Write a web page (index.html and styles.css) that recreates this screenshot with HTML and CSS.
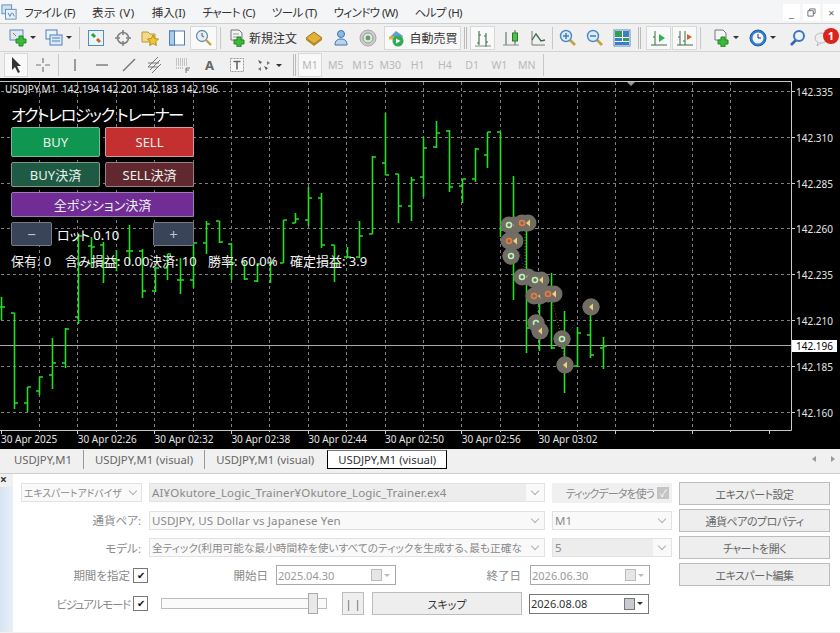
FILE: index.html
```html
<!DOCTYPE html>
<html>

<head>
    <meta charset="UTF-8">
    <title>USDJPY,M1 - MetaTrader</title>
    <link rel="stylesheet" href="styles.css">
</head>
<body>

<header class="menubar">
    <svg class="ico app-ico" viewBox="0 0 18 18"><rect x="1" y="1" width="11" height="10" fill="#cfe0f2" stroke="#5f86b5"/><rect x="5" y="6" width="12" height="11" fill="#e8f1fa" stroke="#5f86b5"/><path d="M8 10l2 4 2-4M13 10l2 4" fill="none" stroke="#4a78b0"/></svg>
    <nav class="menu">
        <span class="tight">ファイル (F)</span>
        <span class="loose">表示 (V)</span>
        <span>挿入(I)</span>
        <span class="tight">チャート (C)</span>
        <span class="tight">ツール (T)</span>
        <span class="tight">ウィンドウ (W)</span>
        <span class="tight">ヘルプ (H)</span>
    </nav>
    <div class="win-btns">
        <span class="win-btn">_</span>
        <span class="win-btn"><svg viewBox="0 0 10 10" width="9" height="9"><path d="M3 3V1h6v5H7M1 3h6v6H1z" fill="none" stroke="#666"/></svg></span>
        <span class="win-btn">×</span>
    </div>
</header>

<div class="toolbar tb-main">
    <span class="tool wide"><svg class="ico" viewBox="0 0 18 18"><rect x="1" y="1" width="13" height="10" fill="#dbe8f5" stroke="#5f86b5"/><path d="M4 4l3 3" stroke="#c96a2a"/><path d="M10 7h4v3h3v4h-3v3h-4v-3H7v-4h3z" fill="#3cb83c" stroke="#1f8a1f"/></svg><i class="caret"></i></span>
    <span class="tool wide"><svg class="ico" viewBox="0 0 18 18"><rect x="1" y="1" width="11" height="9" fill="#eaf2fa" stroke="#4f7fb5"/><rect x="5" y="6" width="12" height="10" fill="#dbe8f5" stroke="#4f7fb5"/><path d="M7 9h8M7 12h8" stroke="#4f7fb5"/></svg><i class="caret"></i></span>
    <span class="sep"></span>
    <span class="tool"><svg class="ico" viewBox="0 0 18 18"><rect x="1.5" y="1.5" width="15" height="15" fill="#eaf4fb" stroke="#4f8fc0"/><path d="M5 5l3 3" stroke="#3a9a3a" stroke-width="3"/><path d="M10 10l3 3" stroke="#d0622a" stroke-width="3"/></svg></span>
    <span class="tool"><svg class="ico" viewBox="0 0 18 18"><circle cx="9" cy="9" r="5.5" fill="none" stroke="#808080" stroke-width="1.6"/><path d="M9 1v5M9 12v5M1 9h5M12 9h5" stroke="#808080" stroke-width="1.6"/></svg></span>
    <span class="tool"><svg class="ico" viewBox="0 0 18 18"><path d="M1 3h6l2 2h5v8H1z" fill="#f3d98a" stroke="#b8963a"/><path d="M12 6l1.7 3.6 3.8.5-2.8 2.6.7 3.8-3.4-1.9-3.4 1.9.7-3.8-2.8-2.6 3.8-.5z" fill="#f2c531" stroke="#b58f16"/></svg></span>
    <span class="tool"><svg class="ico" viewBox="0 0 18 18"><rect x="1.5" y="2" width="15" height="14" fill="#fff" stroke="#4f7fb5"/><rect x="1.5" y="2" width="5" height="14" fill="#a9cdeb" stroke="#4f7fb5"/></svg></span>
    <span class="tool pressed"><svg class="ico" viewBox="0 0 18 18"><circle cx="7" cy="7" r="5.5" fill="#e4eef7" stroke="#6a8cab" stroke-width="1.3"/><path d="M7 4v3l2 1" fill="none" stroke="#555"/><path d="M11 11l5 5" stroke="#c9a13a" stroke-width="2.4"/></svg></span>
    <span class="sep sep-b"></span>
    <span class="tool order"><svg class="ico" viewBox="0 0 18 18"><path d="M3 1h8l3 3v7H3z" fill="#f4f4f4" stroke="#777"/><path d="M5 5h6M5 8h6" stroke="#999"/><path d="M9 8h4v3h3v4h-3v3H9v-3H6v-4h3z" fill="#3cb83c" stroke="#1f8a1f"/></svg><span>新規注文</span></span>
    <span class="tool ml2"><svg class="ico" viewBox="0 0 18 18"><path d="M1 9l8-6 8 6-8 6z" fill="#e2b137" stroke="#97721a"/><path d="M1 9l8 6 8-6v2l-8 6-8-6z" fill="#b98b1f"/></svg></span>
    <span class="tool"><svg class="ico" viewBox="0 0 18 18"><circle cx="9" cy="5" r="3.5" fill="#8cb8e4" stroke="#3f74ad"/><path d="M3 16c0-5 3-6 6-6s6 1 6 6z" fill="#b9d4ef" stroke="#3f74ad"/></svg></span>
    <span class="tool"><svg class="ico" viewBox="0 0 18 18"><circle cx="9" cy="9" r="8" fill="#ccc" stroke="#aaa"/><circle cx="9" cy="9" r="5" fill="#e4e4e4" stroke="#999"/><circle cx="9" cy="9" r="2.4" fill="#5aa55a"/></svg></span>
    <span class="tool pressed auto-trade"><svg class="ico" viewBox="0 0 18 18"><path d="M2 9l7-7 7 5-2 4z" fill="#5f9fd0"/><path d="M2 9h6" stroke="#e2b137" stroke-width="3"/><circle cx="11" cy="12" r="5.5" fill="#33ad55"/><path d="M9 9.5v5l4.5-2.5z" fill="#fff"/></svg><span>自動売買</span></span>
    <span class="grip"></span>
    <span class="tool pressed slim"><svg class="ico" viewBox="0 0 18 18"><path d="M5 2v14M3 14h2M5 6h2M12 4v14M10 7h2M12 13h2" stroke="#3f6b4a" stroke-width="1.1" fill="none"/><path d="M1 17h16" stroke="#888"/></svg></span>
    <span class="tool ml2"><svg class="ico" viewBox="0 0 18 18"><path d="M4 3v13M13 1v15" stroke="#3f6b4a"/><rect x="10.5" y="4" width="5" height="8" fill="#4fc04f" stroke="#2a7a2a"/><path d="M1 16h16" stroke="#888"/></svg></span>
    <span class="tool"><svg class="ico" viewBox="0 0 18 18"><path d="M3 2v14h13" fill="none" stroke="#777"/><path d="M3 11l4-6 5 7 4-1" fill="none" stroke="#3f6b4a" stroke-width="1.3"/></svg></span>
    <span class="sep sep-c"></span>
    <span class="tool"><svg class="ico" viewBox="0 0 18 18"><path d="M11 11l5 5" stroke="#c9a13a" stroke-width="2.6"/><circle cx="7" cy="7" r="5.5" fill="#dcebf8" stroke="#4a88c0" stroke-width="1.4"/><path d="M4 7h6M7 4v6" stroke="#3f7fbd" stroke-width="1.5"/></svg></span>
    <span class="tool"><svg class="ico" viewBox="0 0 18 18"><path d="M11 11l5 5" stroke="#c9a13a" stroke-width="2.6"/><circle cx="7" cy="7" r="5.5" fill="#dcebf8" stroke="#4a88c0" stroke-width="1.4"/><path d="M4 7h6" stroke="#3f7fbd" stroke-width="1.5"/></svg></span>
    <span class="tool"><svg class="ico" viewBox="0 0 18 18"><rect x="1" y="1" width="16" height="16" fill="#fff" stroke="#5f86b5"/><rect x="2" y="2" width="7" height="6" fill="#2e9e5a"/><rect x="10" y="2" width="6" height="6" fill="#3a7fc8"/><rect x="2" y="9" width="7" height="3" fill="#3a7fc8"/><rect x="10" y="9" width="6" height="3" fill="#2e9e5a"/><rect x="2" y="13" width="14" height="3" fill="#3a7fc8"/></svg></span>
    <span class="grip"></span>
    <span class="tool pressed slim ml2"><svg class="ico" viewBox="0 0 18 18"><path d="M5 2v14M3 8h2M1 16h16" stroke="#3f6b4a" fill="none"/><path d="M9 5l6 4-6 4z" fill="#35ad55"/></svg></span>
    <span class="tool pressed slim ml1"><svg class="ico" viewBox="0 0 18 18"><path d="M4 2v14M9 2v14M2 8h2M7 12h2M1 16h16" stroke="#3f6b4a" fill="none"/><path d="M16 8l-5 3V5z" fill="#d0622a"/></svg></span>
    <span class="sep sep-d"></span>
    <span class="tool wide"><svg class="ico" viewBox="0 0 18 18"><path d="M3 1h8l3 3v7H3z" fill="#f4f4f4" stroke="#777"/><path d="M9 8h4v3h3v4h-3v3H9v-3H6v-4h3z" fill="#3cb83c" stroke="#1f8a1f"/></svg><i class="caret"></i></span>
    <span class="tool wide ml1"><svg class="ico" viewBox="0 0 18 18"><circle cx="9" cy="9" r="8" fill="#2f7fcf" stroke="#1f5f9f"/><circle cx="9" cy="9" r="5.5" fill="#f2f6fa"/><path d="M9 5v4h3" fill="none" stroke="#333"/></svg><i class="caret"></i></span>
    <span class="tool ml3"><svg class="ico" viewBox="0 0 18 18"><path d="M3 16l5-5" stroke="#3564b5" stroke-width="2.6"/><circle cx="11" cy="7" r="5" fill="#eaf2fb" stroke="#3f74c0" stroke-width="2"/></svg></span>
    <span class="tool chat"><svg class="ico" viewBox="0 0 18 18"><ellipse cx="8" cy="9" rx="6" ry="5" fill="#eee" stroke="#bbb"/><path d="M5 13l-1 4 4-3" fill="#eee" stroke="#bbb"/></svg><span class="badge">1</span></span>
</div>

<div class="toolbar tb-draw">
    <span class="tool pressed pick"><svg class="ico" viewBox="0 0 18 18"><path d="M5 1v13l3-3 3 6 2-1-3-6h4z" fill="#333"/></svg></span>
    <span class="tool ml1"><svg class="ico" viewBox="0 0 18 18"><path d="M9 2v5M9 11v5M2 9h5M11 9h5" stroke="#777" stroke-width="1.2"/></svg></span>
    <span class="sep sep-e"></span>
    <span class="tool"><svg class="ico" viewBox="0 0 18 18"><path d="M9 3v12" stroke="#777" stroke-width="1.4"/></svg></span>
    <span class="tool"><svg class="ico" viewBox="0 0 18 18"><path d="M3 9h12" stroke="#777" stroke-width="1.4"/></svg></span>
    <span class="tool"><svg class="ico" viewBox="0 0 18 18"><path d="M3 15L15 3" stroke="#777" stroke-width="1.4"/></svg></span>
    <span class="tool"><svg class="ico" viewBox="0 0 18 18"><path d="M1 11L11 1M3 14L13 4M5 17l9-9M1 7h11M1 11h10" stroke="#777" fill="none"/></svg></span>
    <span class="tool"><svg class="ico" viewBox="0 0 18 18"><path d="M2 3h12M2 5h12M2 7h12M2 9h12M2 12h8" stroke="#999" stroke-dasharray="1 1" fill="none"/><path d="M12 12h4M12 12v5M12 14h3" stroke="#777" fill="none"/></svg></span>
    <span class="tool letter">A</span>
    <span class="tool"><svg class="ico" viewBox="0 0 18 18"><rect x="2.5" y="2.5" width="13" height="13" fill="#f8f8f8" stroke="#999" stroke-dasharray="2 1"/><path d="M5.5 5.5h7M9 5.5v8" stroke="#666" stroke-width="1.6"/></svg></span>
    <span class="tool wide"><svg class="ico" viewBox="0 0 18 18"><path d="M3 4l4 2-2 2zM9 10l4 2-2 2z" fill="#555"/><path d="M12 5l3 2-3 2zM6 11l-3 2 3 2z" fill="#777"/></svg><i class="caret"></i></span>
    <span class="grip grip-tf"></span>
    <span class="tf pressed">M1</span>
    <span class="tf">M5</span>
    <span class="tf">M15</span>
    <span class="tf">M30</span>
    <span class="tf">H1</span>
    <span class="tf">H4</span>
    <span class="tf">D1</span>
    <span class="tf">W1</span>
    <span class="tf">MN</span>
    <span class="sep"></span>
</div>

<main class="chart">
    <svg id="plot" viewBox="0 78 840 371" width="840" height="371"></svg>

    <div class="trainer">
        <div class="trainer-title">オクトレロジック トレーナー</div>
        <div class="btn-row">
            <button class="t-btn big buy">BUY</button>
            <button class="t-btn big sell">SELL</button>
        </div>
        <div class="btn-row">
            <button class="t-btn mid buy-close">BUY決済</button>
            <button class="t-btn mid sell-close">SELL決済</button>
        </div>
        <button class="t-btn mid close-all">全ポジション決済</button>
        <div class="lot-row">
            <button class="t-btn lot-btn">−</button>
            <span class="lot-value">ロット 0.10</span>
            <button class="t-btn lot-btn">+</button>
        </div>
    </div>
    <div class="stats">
        <span class="st-hold">保有: 0</span>
        <span class="st-float">含み損益: 0.00</span>
        <span class="st-count">決済: 10</span>
        <span class="st-rate">勝率: 60.0%</span>
        <span>確定損益: 3.9</span>
    </div>
</main>

<div class="tabs">
    <span class="tab">USDJPY,M1</span>
    <span class="tab">USDJPY,M1 (visual)</span>
    <span class="tab tab-last">USDJPY,M1 (visual)</span>
    <span class="tab active">USDJPY,M1 (visual)</span>
    <span class="tab-arrows"><i class="arr-l"></i><i class="arr-r"></i></span>
</div>

<section class="tester">
    <aside class="strip"><span class="strip-close">×</span><div class="strip-fill"></div></aside>
    <div class="form">
        <div class="form-grid">
            <div class="field ea-type"><span class="cut">エキスパートアドバイザ</span><i class="chev"></i></div>
            <div class="field shaded"><span class="fill path">AI¥Okutore_Logic_Trainer¥Okutore_Logic_Trainer.ex4</span><i class="chev"></i></div>
            <div class="tick-opt"><span>ティックデータを使う</span><i class="check-off">✓</i></div>

            <label class="lbl">通貨ペア:</label>
            <div class="field"><span class="fill spaced">USDJPY, US Dollar vs Japanese Yen</span><i class="chev"></i></div>
            <div class="field"><span class="fill">M1</span><i class="chev"></i></div>

            <label class="lbl">モデル:</label>
            <div class="field"><span class="fill cut model">全ティック(利用可能な最小時間枠を使いすべてのティックを生成する、最も正確な</span><i class="chev"></i></div>
            <div class="field shaded"><span class="fill">5</span><i class="chev"></i></div>
        </div>

        <div class="form-row row-period">
            <span class="lbl lbl-check">期間を指定</span>
            <i class="check">✔</i>
            <span class="lbl lbl-start">開始日</span>
            <div class="date off"><span>2025.04.30</span><i class="cal"></i><i class="caret"></i></div>
            <span class="lbl lbl-end">終了日</span>
            <div class="date off"><span>2026.06.30</span><i class="cal"></i><i class="caret"></i></div>
        </div>

        <div class="form-row row-visual">
            <span class="lbl lbl-check lbl-visual">ビジュアルモード</span>
            <i class="check">✔</i>
            <div class="slider"><i class="thumb"></i></div>
            <button class="win pause">| |</button>
            <button class="win skip">スキップ</button>
            <div class="date current"><span>2026.08.08</span><i class="cal"></i><i class="caret"></i></div>
        </div>
    </div>
    <div class="side">
        <button class="win side-btn">エキスパート設定</button>
        <button class="win side-btn">通貨ペアのプロパティ</button>
        <button class="win side-btn">チャートを開く</button>
        <button class="win side-btn">エキスパート編集</button>
    </div>
</section>

<script src="chart.js"></script>
</body>
</html>
```

FILE: styles.css
```css
html {
    font-family: "Noto Sans", "Noto Sans CJK JP", sans-serif;
    font-feature-settings: "palt";
    box-sizing: border-box;
}

*,
*:before,
*:after {
    box-sizing: inherit;
}

body {
    margin: 0;
    width: 840px;
    height: 633px;
    overflow: hidden;
    background-color: #f0f0f0;
    color: #333;
    font-size: 12px;
}

i {
    font-style: normal;
}

.ico {
    width: 18px;
    height: 18px;
    flex: none;
}

/* menu bar */

.menubar {
    height: 24px;
    display: flex;
    align-items: center;
    padding-left: 1px;
    border-bottom: 1px solid #cfcfcf;
    background-color: #f4f5f6;
}

.app-ico {
    width: 16px;
    height: 16px;
}

.menu {
    display: flex;
    gap: 17px;
    margin-left: 7px;
    font-size: 11.5px;
    white-space: nowrap;
}

.menu .tight {
    letter-spacing: -0.6px;
}

.menu .loose {
    letter-spacing: 0.5px;
}

.win-btns {
    display: flex;
    gap: 3px;
    margin-left: auto;
    align-self: flex-start;
    padding-top: 4px;
}

.win-btn {
    width: 17px;
    height: 17px;
    display: flex;
    align-items: center;
    justify-content: center;
    background-color: #fff;
    color: #666;
    font-size: 11px;
}

/* toolbars */

.toolbar {
    display: flex;
    align-items: center;
    padding-left: 4px;
    background-color: #f0f0f0;
}

.tb-main {
    height: 28px;
    border-bottom: 1px solid #d4d4d4;
}

.tb-draw {
    height: 26px;
}

.tool {
    position: relative;
    width: 27px;
    height: 24px;
    flex: none;
    display: flex;
    align-items: center;
    justify-content: center;
}

.tool.wide {
    width: 36px;
    gap: 3px;
}

.tool.pressed,
.tf.pressed {
    background-color: #f9f9f9;
    box-shadow: inset 1px 1px 0 #d8d8d8, inset -1px -1px 0 #d8d8d8;
}

.slim {
    width: 25px;
}

.pick {
    width: 24px;
}

.order {
    width: 72px;
    margin-left: 0;
    gap: 3px;
    justify-content: flex-start;
    padding-left: 2px;
    color: #333;
    white-space: nowrap;
}

.auto-trade {
    width: 77px;
    gap: 4px;
    margin-left: 3px;
    white-space: nowrap;
}

.letter {
    font-weight: 700;
    font-size: 13px;
    color: #666;
}

.ml1 { margin-left: 1px; }
.ml2 { margin-left: 2px; }
.ml3 { margin-left: 3px; }

.caret {
    width: 0;
    height: 0;
    flex: none;
    border-left: 3px solid transparent;
    border-right: 3px solid transparent;
    border-top: 3px solid #333;
}

.sep {
    width: 1px;
    height: 22px;
    flex: none;
    margin: 0 2px 0 3px;
    background-color: #c8c8c8;
}

.sep-b { margin: 0 5px 0 3px; }
.sep-c { margin: 0 1px 0 1px; }
.sep-d { margin: 0 6px 0 3px; }
.sep-e { margin: 0 2px 0 2px; }

.grip {
    width: 3px;
    height: 22px;
    flex: none;
    margin: 0 3px;
    border-left: 1px solid #bbb;
    border-right: 1px solid #bbb;
}

.grip-tf {
    margin: 0 2px 0 7px;
}

.tf {
    width: 27.3px;
    height: 24px;
    flex: none;
    display: flex;
    align-items: center;
    justify-content: center;
    color: #b8b8b8;
    font-size: 10.5px;
}

.tf.pressed {
    width: 24px;
}

.chat .ico {
    margin-right: 4px;
}

.badge {
    position: absolute;
    top: 2px;
    left: 13px;
    width: 16px;
    height: 16px;
    border-radius: 50%;
    background-color: #d8261e;
    color: #fff;
    font-size: 11px;
    font-weight: 700;
    line-height: 16px;
    text-align: center;
}

/* chart */

.chart {
    position: relative;
    height: 371px;
    background-color: #000;
}

#plot {
    display: block;
}

#plot text {
    font-family: "Noto Sans", sans-serif;
    font-size: 10px;
    fill: #e4e4e4;
}

#plot text.price-now {
    fill: #000;
}

.trainer {
    position: absolute;
    left: 11px;
    top: 27px;
    width: 183px;
    display: flex;
    flex-direction: column;
    gap: 5px;
}

.trainer-title {
    height: 21px;
    margin-bottom: -4px;
    color: #fff;
    font-size: 16px;
    letter-spacing: -1.35px;
    line-height: 21px;
    white-space: nowrap;
}

.btn-row {
    display: flex;
    gap: 5px;
}

.btn-row .t-btn {
    flex: 1;
}

.t-btn {
    padding: 0;
    border: 1px solid #8a9a90;
    border-radius: 2px;
    color: #e8f2ec;
    font-family: inherit;
    font-feature-settings: inherit;
    font-size: 13px;
}

.big { height: 30px; }
.mid { height: 25px; }

.buy {
    background-color: #0f9650;
    border-color: #7fb898;
}

.sell {
    background-color: #c42f2f;
    border-color: #d69a9a;
}

.buy-close {
    background-color: #1f5a45;
    border-color: #7a9a8a;
}

.sell-close {
    background-color: #62282f;
    border-color: #9a7f82;
}

.close-all {
    width: 100%;
    background-color: #722c96;
    border-color: #9a7fb0;
}

.lot-row {
    height: 24px;
    display: flex;
    align-items: center;
}

.lot-btn {
    width: 41px;
    height: 24px;
    background-color: #3a4458;
    border-color: #767b85;
    color: #bcc3cf;
    font-size: 15px;
    line-height: 1;
}

.lot-value {
    flex: 1;
    padding-left: 5px;
    color: #fff;
    font-size: 13px;
    white-space: nowrap;
}

.stats {
    position: absolute;
    left: 11px;
    top: 173px;
    display: flex;
    color: #f2f2f2;
    font-size: 13px;
    white-space: nowrap;
}

.st-hold { width: 54px; }
.st-float { width: 84px; }
.st-count { width: 59px; }
.st-rate { width: 82px; }

/* tabs */

.tabs {
    height: 25px;
    display: flex;
    align-items: flex-start;
    padding-top: 1px;
    border-bottom: 1px solid #cfcfcf;
    color: #666;
    font-size: 11.3px;
}

.tab {
    height: 19px;
    padding: 0 11px;
    border-right: 1px solid #999;
    line-height: 19px;
    white-space: nowrap;
}

.tab:first-child {
    padding-left: 14px;
}

.tab-last {
    width: 122px;
    border-right: 0;
}

.tab.active {
    width: 120px;
    padding-left: 10px;
    border: 1px solid #000;
    border-top-color: #777;
    background-color: #fff;
    color: #333;
    line-height: 17px;
}

.tab-arrows {
    margin-left: auto;
    padding: 6px 5px 0 0;
    display: flex;
    gap: 15px;
}

.arr-l,
.arr-r {
    width: 0;
    height: 0;
    border-top: 3px solid transparent;
    border-bottom: 3px solid transparent;
}

.arr-l { border-right: 4px solid #999; }
.arr-r { border-left: 4px solid #999; }

/* strategy tester */

.tester {
    height: 158px;
    display: flex;
    background-color: #fff;
    color: #8a8a8a;
}

.strip {
    width: 13px;
    flex: none;
    display: flex;
    flex-direction: column;
    background-color: #f0f0f0;
}

.strip-close {
    height: 13px;
    color: #333;
    font-size: 12px;
    font-weight: 700;
    line-height: 11px;
}

.strip-fill {
    flex: 1;
    background: linear-gradient(to right, #d5e4f2, #e8f0f7);
}

.form {
    width: 659px;
    flex: none;
    padding-top: 9px;
}

.form-grid {
    display: grid;
    grid-template-columns: 129px 396px 120px;
    grid-auto-rows: 19px;
    gap: 8.5px 7px;
    align-items: center;
}

.lbl {
    font-size: 11.5px;
    text-align: right;
    white-space: nowrap;
}

.form-grid .lbl {
    padding-right: 1px;
}

.field {
    height: 19px;
    display: flex;
    align-items: center;
    border: 1px solid #e2e2e2;
    background-color: #f9f9f9;
    font-size: 11.5px;
    overflow: hidden;
}

.field .fill {
    flex: 1;
    padding-left: 2px;
    white-space: nowrap;
}

.field.shaded .fill {
    height: 100%;
    margin-right: 18px;
    background-color: #ededed;
    line-height: 17px;
}

.field.shaded .chev {
    margin-left: -12px;
}

.path {
    letter-spacing: 0.15px;
}

.spaced {
    letter-spacing: 0.15px;
}

.model {
    font-size: 10.7px;
}

.cut {
    min-width: 0;
    overflow: hidden;
    white-space: nowrap;
}

.ea-type {
    margin-left: 8px;
    padding-left: 2px;
    justify-content: space-between;
    font-size: 9.8px;
}

.ea-type .chev {
    margin: -3px 5px 0 5px;
}

.chev {
    width: 6px;
    height: 6px;
    flex: none;
    margin: -3px 6px 0 6px;
    border-right: 1px solid #b0b0b0;
    border-bottom: 1px solid #b0b0b0;
    transform: rotate(45deg);
}

.tick-opt {
    height: 20px;
    display: flex;
    align-items: center;
    justify-content: flex-end;
    gap: 3px;
    padding-right: 3px;
    background-color: #f0f0f0;
    font-size: 11px;
    letter-spacing: -0.9px;
    white-space: nowrap;
}

.check-off {
    width: 12px;
    height: 12px;
    background-color: #c4c4c4;
    color: #fff;
    font-size: 10px;
    line-height: 12px;
    text-align: center;
}

.form-row {
    display: flex;
    align-items: center;
}

.row-period {
    height: 20px;
    margin-top: 8px;
}

.row-visual {
    height: 23px;
    margin-top: 7px;
}

.lbl-check {
    width: 117px;
    margin-right: 3px;
}

.lbl-visual {
    letter-spacing: -1.2px;
}

.check {
    width: 15px;
    height: 15px;
    flex: none;
    border: 1px solid #777;
    background-color: #fff;
    color: #111;
    font-size: 10px;
    line-height: 13px;
    text-align: center;
}

.lbl-start {
    width: 120px;
    margin-right: 8px;
}

.lbl-end {
    width: 125px;
    margin-right: 9px;
}

.date {
    width: 120px;
    height: 20px;
    flex: none;
    display: flex;
    align-items: center;
    padding: 0 5px 0 1px;
    border: 1px solid #aaa;
    background-color: #fff;
    font-size: 11px;
}

.date span {
    flex: 1;
}

.date.off {
    color: #9a9a9a;
}

.date.off .caret {
    border-top-color: #bbb;
}

.date.current {
    margin-left: 7px;
    border-color: #777;
    color: #333;
}

.cal {
    width: 11px;
    height: 12px;
    margin-right: 2px;
    border: 1px solid #bbb;
    background-color: #e6e6e6;
}

.date.current .cal {
    border-color: #777;
    background-color: #c8ccd2;
}

.slider {
    position: relative;
    width: 166px;
    height: 11px;
    flex: none;
    margin-left: 13px;
    border: 1px solid #bbb;
    background-color: #fafafa;
}

.thumb {
    position: absolute;
    left: 146px;
    top: -6px;
    width: 10px;
    height: 21px;
    border: 1px solid #aaa;
    background-color: #e8e8e8;
}

.win {
    padding: 0;
    border: 1px solid #bdbdbd;
    background-color: #eeeeee;
    color: #666;
    font-family: inherit;
    font-feature-settings: inherit;
    font-size: 11px;
}

.pause {
    width: 22px;
    height: 23px;
    flex: none;
    margin-left: 15px;
}

.skip {
    width: 150px;
    height: 23px;
    flex: none;
    margin-left: 8px;
    color: #333;
}

.side {
    width: 151px;
    flex: none;
    display: flex;
    flex-direction: column;
    gap: 4px;
    margin-left: 7px;
    padding-top: 8px;
}

.side-btn {
    height: 23px;
    letter-spacing: -0.5px;
}
```

FILE: chart.js
```js
// bars: [high, low, open, close] in page pixels, one bar every 12.8px
const bars = [
    [297, 320, 307, 307], [313, 409, 313, 403], [387, 412, 403, 387], [377, 395, 391, 377],
    [338, 389, 375, 363], [328, 368, 363, 329], [235, 324, 317, 236], [237, 268, 246, 247],
    [242, 283, 245, 263], [250, 271, 260, 260], [225, 265, 251, 251], [249, 298, 251, 291],
    [267, 292, 291, 268], [254, 280, 268, 254], [258, 294, 280, 280], [243, 288, 280, 243],
    [221, 254, 243, 224], [221, 243, 221, 242], [243, 280, 244, 263], [262, 280, 262, 279],
    [263, 282, 281, 264], [263, 283, 263, 263], [220, 263, 263, 220], [213, 223, 223, 219],
    [187, 226, 220, 198], [193, 248, 198, 245], [245, 282, 245, 263], [247, 258, 257, 257],
    [221, 258, 257, 236], [156, 234, 234, 157], [113, 175, 163, 175], [174, 223, 174, 206],
    [177, 221, 206, 180], [137, 197, 177, 148], [121, 148, 147, 133], [130, 192, 131, 187],
    [179, 203, 186, 179], [148, 182, 179, 149], [132, 168, 155, 132], [132, 237, 132, 230],
    [176, 300, 230, 228], [217, 353, 225, 328], [275, 351, 328, 331], [273, 349, 295, 348],
    [311, 393, 348, 366], [327, 367, 366, 333], [310, 358, 335, 355], [337, 369, 348, 346],
];

// order marks: x, y, colour of the entry glyph (null = exit only), double width
const marks = [
    [512, 225, '#b8f5b8', true], [525, 223, '#f07a3a', true], [512, 241, '#f07a3a', true],
    [511, 256, '#b8f5b8', false], [525, 277, '#b8f5b8', true], [538, 280, '#b8f5b8', true],
    [537, 296, '#f07a3a', true], [551, 294, '#f07a3a', true], [536, 323, '#b8f5b8', false],
    [540, 331, null, false], [562, 339, '#b8f5b8', false], [565, 365, null, false],
    [591, 307, null, false],
];

const prices = ['142.335', '142.310', '142.285', '142.260', '142.235', '142.210', '142.185', '142.160'];
const times = ['30 Apr 2025', '30 Apr 02:26', '30 Apr 02:32', '30 Apr 02:38', '30 Apr 02:44',
    '30 Apr 02:50', '30 Apr 02:56', '30 Apr 03:02'];

function main() {
    let out = '';

    // grid
    let grid = '';
    for (let i = 1; i < 20; i++) {
        const x = Math.round(0.6 + i * 38.4) + 0.5;
        grid += `M${x} 82V430`;
    }
    prices.forEach((p, i) => {
        const y = Math.round(91 + i * 45.8) + 0.5;
        grid += `M1 ${y}H791`;
        out += `<path d="M791 ${y}h4" stroke="#ccc"/>`;
        out += `<text x="796" y="${y + 4}">${p}</text>`;
    });
    out += `<path d="${grid}" stroke="#808080" stroke-dasharray="3 3" fill="none"/>`;

    // frame
    out += '<path d="M0 81.5H791.5V430.5H0" stroke="#c8c8c8" fill="none"/>';
    out += '<path d="M627 82h8l-4 4z" fill="#999"/>';
    for (let i = 0; i < 21; i++) {
        const x = Math.round(0.6 + i * 38.4) + 0.5;
        out += `<path d="M${x} 430v${i % 2 ? 2 : 4}" stroke="#ccc"/>`;
    }
    times.forEach((t, i) => {
        const x = i === 0 ? 1 : i * 76.8 + 1;
        out += `<text x="${x}" y="443">${t}</text>`;
    });

    // current price line
    out += '<path d="M0 345.5H791" stroke="#a8a8a8"/>';

    // connecting lines of the trades
    out += '<path d="M516 240L528 282M540 290L536 323M562 339L591 307" stroke="#2a3fb0" stroke-dasharray="1 2" fill="none"/>';
    out += '<path d="M551 296L562 339M525 225V277M562 342L565 365" stroke="#c03a2a" stroke-dasharray="1 2" fill="none"/>';

    // bars
    let d = '';
    bars.forEach(([high, low, open, close], i) => {
        const x = Math.round(1 + i * 12.8) + 0.5;
        d += `M${x} ${high}V${low}M${x - 3.5} ${open}H${x}M${x} ${close}H${x + 3.5}`;
    });
    out += `<path d="${d}" stroke="#22e022" stroke-width="1.6" fill="none"/>`;

    // order marks sit on top of the bars
    for (const [x, y, color, double] of marks) {
        const dx = double ? 3 : 0;
        out += `<circle cx="${x - dx}" cy="${y}" r="8.5" fill="#726d64"/>`;
        out += `<circle cx="${x + dx}" cy="${y}" r="8.5" fill="#726d64"/>`;
        if (color) {
            const cx = double ? x - 3 : x;
            out += `<circle cx="${cx}" cy="${y}" r="2.5" fill="none" stroke="${color}" stroke-width="1.6"/>`;
        }
        if (!color || double) {
            const ax = double ? x + 1 : x - 2;
            out += `<path d="M${ax} ${y}l4-3.5v7z" fill="#efd27a"/>`;
        }
    }

    // current price label, over the axis
    out += '<rect x="792" y="340" width="45" height="12" fill="#fff"/>';
    out += '<text class="price-now" x="796" y="350">142.196</text>';

    // chart header
    out += '<text x="5" y="93">USDJPY,M1</text>';
    [['142.194', 62], ['142.201', 101], ['142.183', 141], ['142.196', 181]].forEach(([p, x]) => {
        out += `<text x="${x}" y="93">${p}</text>`;
    });

    document.getElementById('plot').innerHTML = out;
}

main();
```
